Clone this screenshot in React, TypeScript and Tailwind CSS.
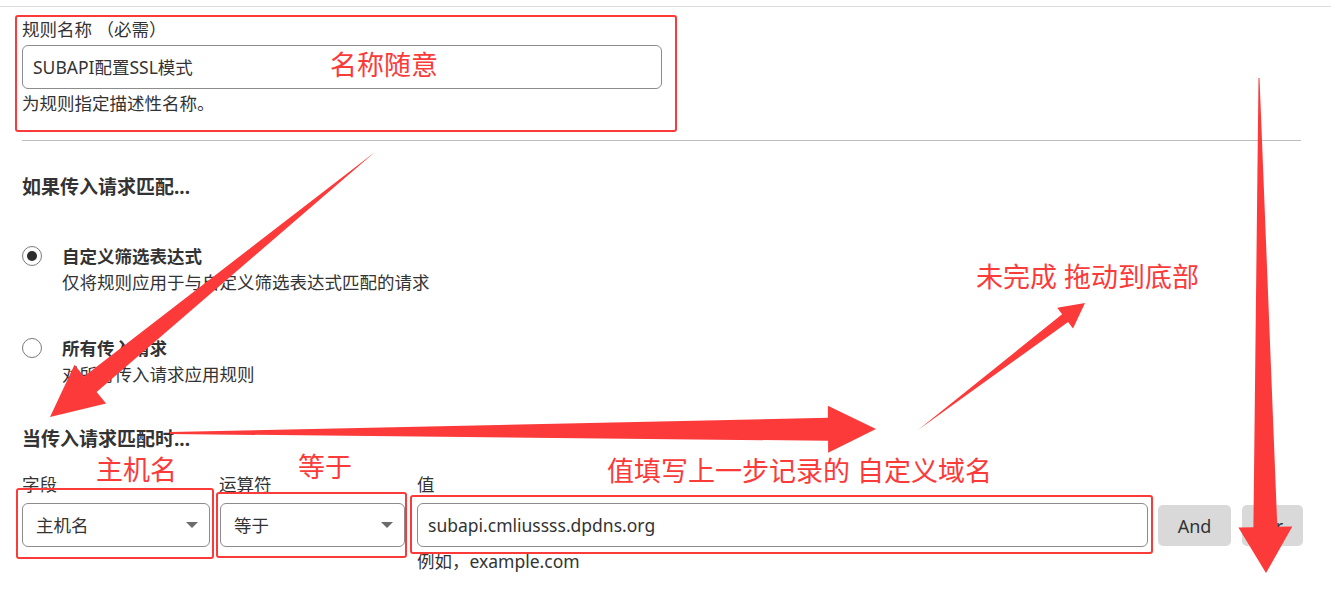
type Pt = [number, number];

function arrowPoints(
  tail: Pt,
  tip: Pt,
  tailW: number,
  shaftW: number,
  headLen: number,
  headW: number
) {
  const dx = tip[0] - tail[0];
  const dy = tip[1] - tail[1];
  const len = Math.hypot(dx, dy);
  const ux = dx / len;
  const uy = dy / len;
  const px = -uy;
  const py = ux;
  const bx = tip[0] - ux * headLen;
  const by = tip[1] - uy * headLen;
  const pts: Pt[] = [
    [tail[0] + (px * tailW) / 2, tail[1] + (py * tailW) / 2],
    [bx + (px * shaftW) / 2, by + (py * shaftW) / 2],
    [bx + (px * headW) / 2, by + (py * headW) / 2],
    tip,
    [bx - (px * headW) / 2, by - (py * headW) / 2],
    [bx - (px * shaftW) / 2, by - (py * shaftW) / 2],
    [tail[0] - (px * tailW) / 2, tail[1] - (py * tailW) / 2],
  ];
  return pts.map((p) => `${p[0].toFixed(1)},${p[1].toFixed(1)}`).join(" ");
}

// red markup drawn on top of the screenshot
const arrows = [
  arrowPoints([375, 152], [50, 417], 0, 20, 52, 50),
  arrowPoints([170, 433], [876, 429], 2, 23, 48, 47),
  arrowPoints([918, 430], [1085, 303], 0, 10, 25, 26),
  arrowPoints([1259, 78], [1266, 573], 1, 24, 46, 54),
];

function Caret() {
  return (
    <svg width="12" height="6" viewBox="0 0 12 6">
      <polygon points="0,0 12,0 6,6" fill="#6b6b6b" />
    </svg>
  );
}

function Radio({ checked }: { checked?: boolean }) {
  return (
    <div className="mt-[2px] flex h-[20px] w-[20px] shrink-0 items-center justify-center rounded-full border border-[#7a7a7a] bg-white">
      {checked && <div className="h-[10px] w-[10px] rounded-full bg-[#2e2e2e]" />}
    </div>
  );
}

function Select({ value, width }: { value: string; width: string }) {
  return (
    <div
      className={`mt-[7px] flex h-[44px] ${width} items-center justify-between rounded-[6px] border border-[#8c8c8c] bg-white pl-[13px] pr-[11px]`}
    >
      <span>{value}</span>
      <Caret />
    </div>
  );
}

export default function App() {
  return (
    <div className="relative h-[604px] w-full overflow-hidden bg-white font-['Noto_Sans','Noto_Sans_CJK_SC',sans-serif] text-[17.5px] leading-[24px] text-[#333]">
      <div className="h-[7px] border-b border-[#dedede]" />

      <div className="px-[22px]">
        <div className="mt-[10px]">规则名称 （必需）</div>
        <div className="mt-[4px] flex h-[44px] w-[640px] items-center rounded-[6px] border border-[#8c8c8c] px-[10px]">
          SUBAPI配置SSL模式
        </div>
        <div className="mt-[2px]">为规则指定描述性名称。</div>
      </div>

      <div className="ml-[22px] mr-[30px] mt-[25px] border-t border-[#bdbdbd]" />

      <div className="px-[22px]">
        <div className="mt-[34px] text-[19px] font-bold">如果传入请求匹配...</div>

        <div className="mt-[45px] flex gap-[20px]">
          <Radio checked />
          <div>
            <div className="font-bold">自定义筛选表达式</div>
            <div className="mt-[2px]">仅将规则应用于与自定义筛选表达式匹配的请求</div>
          </div>
        </div>

        <div className="mt-[42px] flex gap-[20px]">
          <Radio />
          <div>
            <div className="font-bold">所有传入请求</div>
            <div className="mt-[2px]">对所有传入请求应用规则</div>
          </div>
        </div>

        <div className="mt-[41px] text-[19px] font-bold">当传入请求匹配时...</div>

        <div className="mt-[21px] flex items-start">
          <div className="flex flex-col">
            <span>字段</span>
            <Select value="主机名" width="w-[188px]" />
          </div>
          <div className="ml-[10px] flex flex-col">
            <span className="-ml-[1px]">运算符</span>
            <Select value="等于" width="w-[185px]" />
          </div>
          <div className="ml-[12px] flex flex-col">
            <span>值</span>
            <div className="mt-[7px] flex h-[44px] w-[731px] items-center rounded-[6px] border border-[#8c8c8c] px-[10px]">
              subapi.cmliussss.dpdns.org
            </div>
            <span className="mt-[2px]">例如，example.com</span>
          </div>
          <div className="ml-[10px] mt-[33px] flex gap-[11px]">
            <button className="h-[41px] w-[73px] rounded-[5px] bg-[#d9d9d9] text-[18px] text-[#333]">
              And
            </button>
            <button className="h-[41px] w-[61px] rounded-[5px] bg-[#d9d9d9] text-[18px] text-[#333]">
              Or
            </button>
          </div>
        </div>
      </div>

      {/* annotation boxes */}
      <div className="absolute left-[15px] top-[15px] h-[117px] w-[662px] rounded-[3px] border-2 border-[#fb3a3a]" />
      <div className="absolute left-[16px] top-[488px] h-[71px] w-[198px] rounded-[3px] border-2 border-[#fb3a3a]" />
      <div className="absolute left-[216px] top-[492px] h-[66px] w-[191px] rounded-[3px] border-2 border-[#fb3a3a]" />
      <div className="absolute left-[410px] top-[495px] h-[59px] w-[743px] rounded-[3px] border-2 border-[#fb3a3a]" />

      {/* annotation text */}
      <div className="absolute left-[330px] top-[50px] text-[27px] leading-[30px] text-[#fb3a3a]">名称随意</div>
      <div className="absolute left-[96px] top-[455px] text-[27px] leading-[30px] text-[#fb3a3a]">主机名</div>
      <div className="absolute left-[298px] top-[452px] text-[27px] leading-[30px] text-[#fb3a3a]">等于</div>
      <div className="absolute left-[607px] top-[456px] text-[27px] leading-[30px] text-[#fb3a3a]">
        值填写上一步记录的 自定义域名
      </div>
      <div className="absolute left-[976px] top-[262px] text-[27px] leading-[30px] text-[#fb3a3a]">
        未完成 拖动到底部
      </div>

      <svg
        className="pointer-events-none absolute left-0 top-0"
        width="1331"
        height="604"
        viewBox="0 0 1331 604"
      >
        {arrows.map((pts, i) => (
          <polygon key={i} points={pts} fill="#fc3a3a" />
        ))}
      </svg>
    </div>
  );
}
